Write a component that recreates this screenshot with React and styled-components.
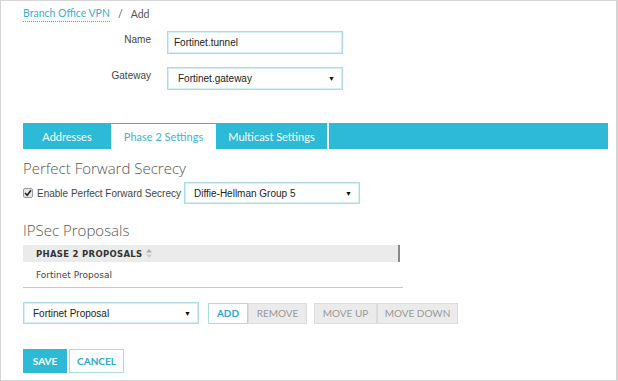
import React from "react";
import styled, { createGlobalStyle } from "styled-components";

const Global = createGlobalStyle`
  html, body { margin: 0; padding: 0; background: #fff; }
  body { font-family: "Liberation Sans", Arial, sans-serif; }
  * { box-sizing: border-box; }
`;

const Frame = styled.div`
  width: 618px;
  height: 381px;
  border: 1px solid #d4d4d4;
  border-right-width: 2px;
  padding: 5px 0 0 22px;
  display: flex;
  flex-direction: column;
  overflow: hidden;
`;

const Crumbs = styled.div`
  display: flex;
  align-items: center;
  gap: 8px;
  font-size: 10.5px;
  line-height: 14px;
  color: #555;
  font-family: Lato, sans-serif;
`;

const CrumbLink = styled.span`
  color: #3aaed0;
  border-bottom: 1px dotted #3aaed0;
  padding-bottom: 1px;
`;

const FormGrid = styled.div`
  display: grid;
  grid-template-columns: 128px 176px;
  column-gap: 16px;
  row-gap: 13px;
  margin-top: 9px;
  align-items: center;
`;

const Label = styled.label`
  text-align: right;
  font-size: 10px;
  color: #444;
  position: relative;
  top: -3px;
`;

const Field = styled.div`
  height: ${(p) => p.h || 23}px;
  width: ${(p) => p.w || 176}px;
  border: 1px solid #a9dce8;
  box-shadow: inset 0 0 0 1px #d6eff5;
  display: flex;
  align-items: center;
  justify-content: space-between;
  padding: 0 7px 0 ${(p) => p.pl || 6}px;
  font-size: 10px;
  color: #222;
  background: #fff;
`;

const Arrow = styled.span`
  font-size: 7px;
  color: #111;
`;

const Tabs = styled.div`
  margin-top: 33px;
  width: 585px;
  height: 26px;
  background: #2cbad6;
  display: flex;
  font-family: Lato, "Open Sans", sans-serif;
  font-size: 11px;
`;

const Tab = styled.div`
  width: ${(p) => p.w}px;
  display: flex;
  align-items: center;
  justify-content: center;
  color: ${(p) => (p.active ? "#3db4d2" : "#fff")};
  background: ${(p) => (p.active ? "#fff" : "transparent")};
  border-top: ${(p) => (p.active ? "1px solid #2cbad6" : "none")};
  border-right: ${(p) => (p.sep ? "2px solid #e8f7fb" : "none")};
`;

const Heading = styled.h2`
  margin: ${(p) => p.mt}px 0 0;
  font-family: "Open Sans", sans-serif;
  font-weight: 300;
  font-size: 15px;
  line-height: 20px;
  color: #555;
`;

const CheckRow = styled.div`
  display: flex;
  align-items: center;
  margin-top: 4px;
  font-size: 10px;
  color: #444;
`;

const Check = styled.span`
  width: 10px;
  height: 10px;
  border: 1px solid #999;
  border-radius: 2px;
  background: #e8e8e8;
  margin-right: 4px;
  display: flex;
  align-items: center;
  justify-content: center;
`;

const CheckText = styled.span`
  margin-right: 3px;
`;

const Table = styled.div`
  width: 380px;
  margin-top: 5px;
  border-bottom: 1px solid #c8c8c8;
  font-family: "DejaVu Sans", Verdana, sans-serif;
`;

const HeadRow = styled.div`
  height: 17px;
  background: #ebebeb;
  display: flex;
  align-items: center;
  padding-left: 13px;
  font-size: 8.5px;
  font-weight: 700;
  color: #333;
  letter-spacing: 0.3px;
  border-right: 2px solid #888;
  margin-right: 3px;
  gap: 4px;
`;

const BodyRow = styled.div`
  height: 25px;
  display: flex;
  align-items: center;
  padding-left: 13px;
  font-size: 9px;
  color: #444;
`;

const Actions = styled.div`
  display: flex;
  align-items: center;
  margin-top: 14px;
`;

const Btn = styled.button`
  height: ${(p) => p.h || 21}px;
  width: ${(p) => p.w}px;
  padding: 0;
  margin-left: ${(p) => p.ml || 0}px;
  border: 1px solid ${(p) => (p.kind === "gray" ? "#dcdcdc" : p.kind === "primary" ? "#2cbad6" : "#a9dce8")};
  background: ${(p) => (p.kind === "gray" ? "#ebebeb" : p.kind === "primary" ? "#2cbad6" : "#fff")};
  color: ${(p) => (p.kind === "gray" ? "#999" : p.kind === "primary" ? "#fff" : "#2aa9cc")};
  font-family: Lato, sans-serif;
  font-size: 10px;
  font-weight: ${(p) => (p.kind === "gray" ? 400 : 700)};
  cursor: pointer;
`;

const Footer = styled.div`
  display: flex;
  gap: 2px;
  margin-top: 25px;
`;

const SortIcon = () => (
  <svg width="6" height="9" viewBox="0 0 6 9">
    <path d="M3 0 L6 3.5 H0 Z" fill="#aaa" />
    <path d="M3 9 L6 5.5 H0 Z" fill="#ccc" />
  </svg>
);

const CheckMark = () => (
  <svg width="8" height="8" viewBox="0 0 8 8">
    <path d="M1 4 L3.2 6.3 L7 1.2" stroke="#222" strokeWidth="1.6" fill="none" />
  </svg>
);

export default function App() {
  return (
    <>
      <Global />
      <Frame>
        <Crumbs>
          <CrumbLink>Branch Office VPN</CrumbLink>
          <span>/</span>
          <span>Add</span>
        </Crumbs>

        <FormGrid>
          <Label>Name</Label>
          <Field>Fortinet.tunnel</Field>
          <Label>Gateway</Label>
          <Field pl={10}>
            Fortinet.gateway <Arrow>▼</Arrow>
          </Field>
        </FormGrid>

        <Tabs>
          <Tab w={88}>Addresses</Tab>
          <Tab w={105} active>Phase 2 Settings</Tab>
          <Tab w={113} sep>Multicast Settings</Tab>
        </Tabs>

        <Heading mt={9}>Perfect Forward Secrecy</Heading>
        <CheckRow>
          <Check>
            <CheckMark />
          </Check>
          <CheckText>Enable Perfect Forward Secrecy</CheckText>
          <Field h={22} pl={9}>
            Diffie-Hellman Group 5 <Arrow>▼</Arrow>
          </Field>
        </CheckRow>

        <Heading mt={16}>IPSec Proposals</Heading>
        <Table>
          <HeadRow>
            PHASE 2 PROPOSALS <SortIcon />
          </HeadRow>
          <BodyRow>Fortinet Proposal</BodyRow>
        </Table>

        <Actions>
          <Field h={22} pl={9}>
            Fortinet Proposal <Arrow>▼</Arrow>
          </Field>
          <Btn ml={9} w={40}>ADD</Btn>
          <Btn kind="gray" w={59}>REMOVE</Btn>
          <Btn kind="gray" ml={7} w={63}>MOVE UP</Btn>
          <Btn kind="gray" w={81}>MOVE DOWN</Btn>
        </Actions>

        <Footer>
          <Btn kind="primary" h={24} w={44}>SAVE</Btn>
          <Btn h={24} w={55}>CANCEL</Btn>
        </Footer>
      </Frame>
    </>
  );
}
